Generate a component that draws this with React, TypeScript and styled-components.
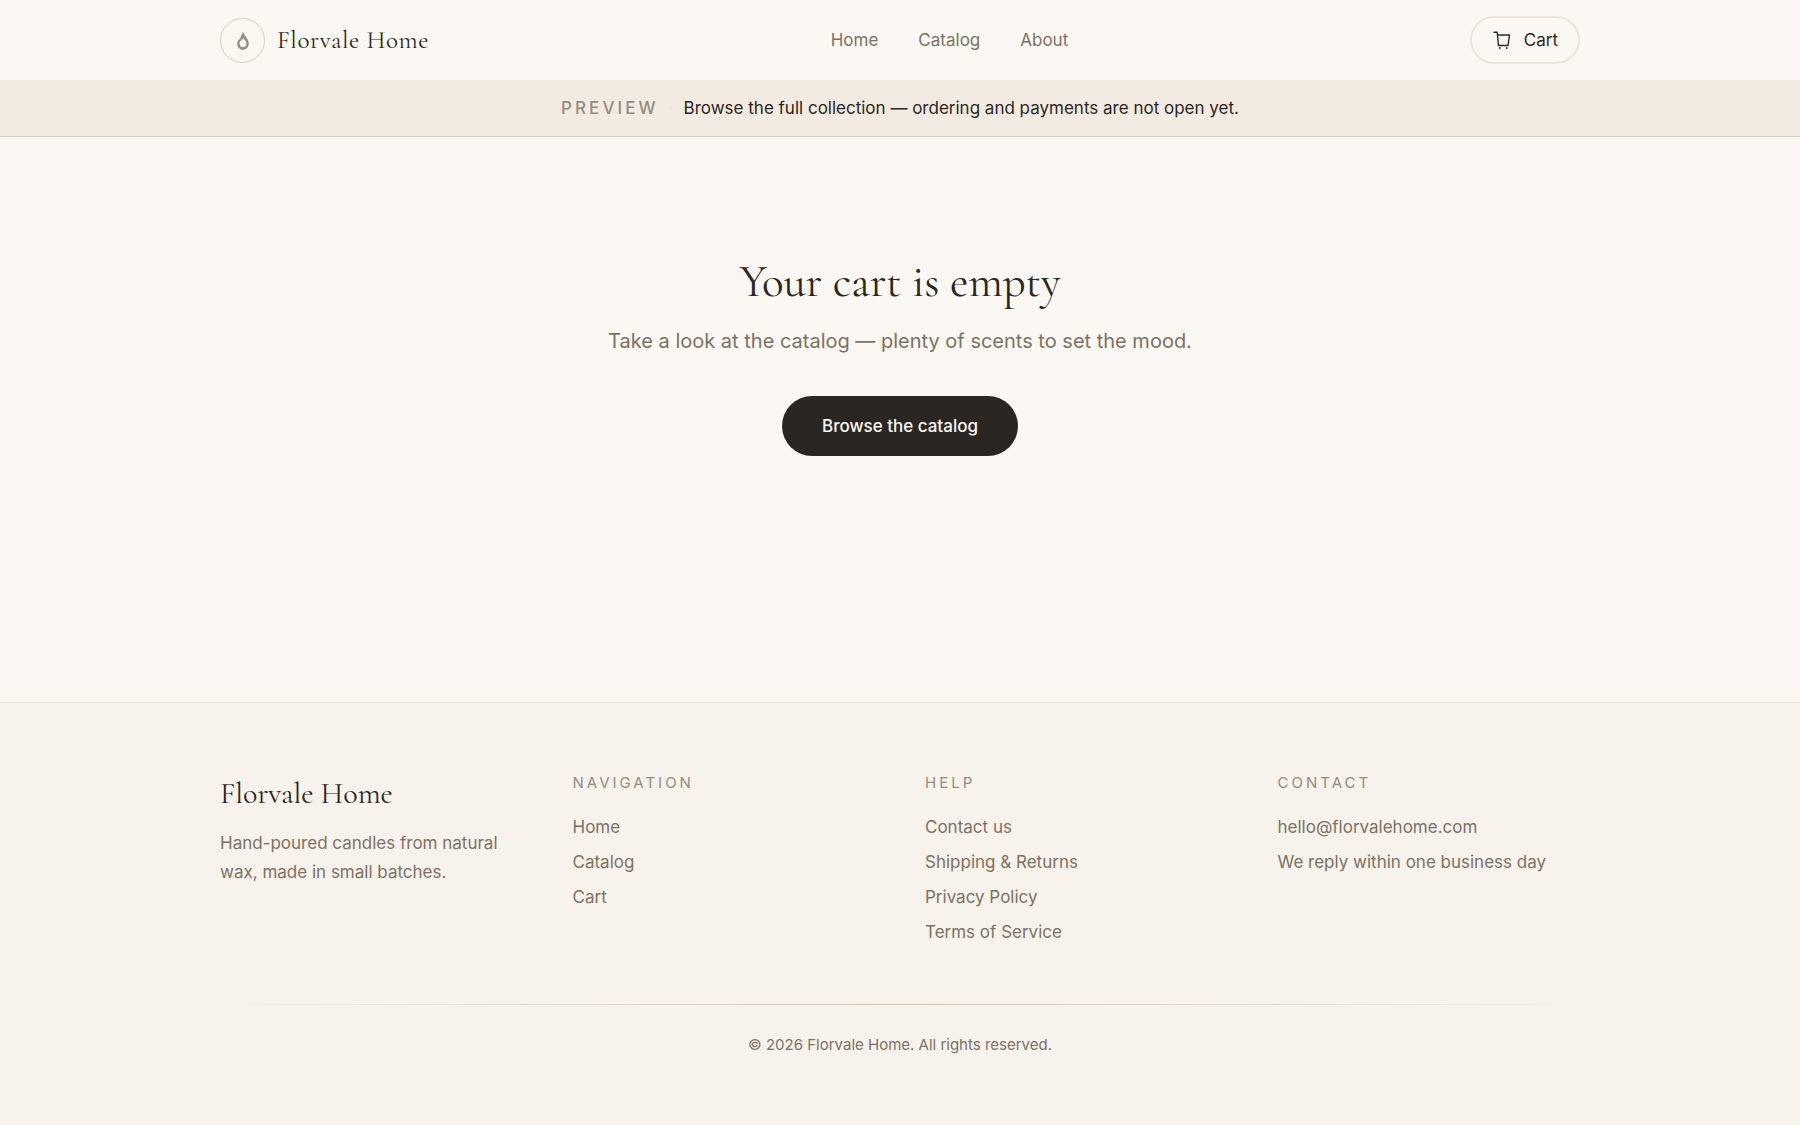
import React from 'react';
import styled, { createGlobalStyle } from 'styled-components';

const color = {
  page: '#fbf8f3',
  panel: '#f7f2ec',
  banner: '#f3ebe2',
  ink: '#2b2621',
  muted: '#7d7163',
  soft: '#968b7c',
  line: '#ede5d8',
  lineStrong: '#d9cebe',
};
const sans = 'Inter, "Noto Sans", sans-serif';
const serif = '"Cormorant Garamond", "Liberation Serif", serif';

const Global = createGlobalStyle`
  *, *::before, *::after { box-sizing: border-box; }
  body { margin: 0; background: ${color.page}; color: ${color.ink}; font: 400 17px/24px ${sans}; }
  h1, h2, p, ul { margin: 0; padding: 0; }
  ul { list-style: none; }
  a { color: inherit; text-decoration: none; }
  button { cursor: pointer; }
`;

const Page = styled.div`
  display: flex;
  flex-direction: column;
  min-height: 100vh;
`;

const Container = styled.div`
  width: 100%;
  max-width: 1424px;
  margin: 0 auto;
  padding: 0 32px;
`;

const HeaderBar = styled(Container)`
  display: flex;
  align-items: center;
  justify-content: space-between;
  padding-top: 16px;
  padding-bottom: 16px;
`;

const Brand = styled.a`
  display: flex;
  align-items: center;
  gap: 12px;
  font: 400 25px/32px ${serif};
  letter-spacing: 0.025em;
`;

const Mark = styled.span`
  display: flex;
  align-items: center;
  justify-content: center;
  width: 45px;
  height: 45px;
  border: 1px solid ${color.lineStrong};
  border-radius: 50%;
  color: ${color.soft};
`;

const Nav = styled.nav`
  display: flex;
  gap: 40px;
  color: ${color.muted};
`;

const CartButton = styled.button`
  display: flex;
  align-items: center;
  gap: 12px;
  height: 48px;
  padding: 0 20px;
  border: 2px solid ${color.line};
  border-radius: 24px;
  background: transparent;
  color: ${color.ink};
  font: 400 17px/24px ${sans};
`;

const Banner = styled.aside`
  display: flex;
  justify-content: center;
  align-items: center;
  gap: 10px;
  padding: 16px 32px;
  background: ${color.banner};
  border-bottom: 1px solid ${color.lineStrong};
`;

const Tag = styled.strong`
  font-weight: 500;
  letter-spacing: 0.18em;
  color: ${color.soft};
`;

const Dot = styled.span`
  color: ${color.line};
`;

const Main = styled.main`
  display: flex;
  flex-direction: column;
  align-items: center;
  padding: 120px 32px 246px;
  text-align: center;
`;

const Title = styled.h1`
  font: 400 45px/50px ${serif};
`;

const Lead = styled.p`
  margin-top: 18px;
  font-size: 20px;
  line-height: 32px;
  color: ${color.muted};
`;

const Primary = styled.button`
  margin-top: 39px;
  height: 60px;
  padding: 0 40px;
  border: 0;
  border-radius: 30px;
  background: ${color.ink};
  color: ${color.page};
  font: 500 17px/24px ${sans};
`;

const Foot = styled.footer`
  flex: 1;
  padding: 69px 0;
  background: ${color.panel};
  border-top: 1px solid ${color.line};
`;

const Columns = styled.div`
  display: grid;
  grid-template-columns: repeat(4, 1fr);
  gap: 50px;
`;

const FootBrand = styled.h2`
  padding-top: 2px;
  font: 400 30px/40px ${serif};
`;

const Tagline = styled.p`
  margin-top: 15px;
  line-height: 29px;
  color: ${color.muted};
`;

const ColumnTitle = styled.h2`
  padding-top: 1px;
  font: 400 15px/20px ${sans};
  letter-spacing: 0.2em;
  text-transform: uppercase;
  color: ${color.soft};
`;

const Links = styled.ul`
  display: flex;
  flex-direction: column;
  gap: 11px;
  margin-top: 22px;
  color: ${color.muted};
`;

const Rule = styled.div`
  height: 1px;
  margin-top: 60px;
  background: linear-gradient(90deg, transparent, #cfc2b0, transparent);
`;

const Legal = styled.p`
  margin-top: 30px;
  font-size: 15px;
  line-height: 20px;
  text-align: center;
  color: ${color.muted};
`;

const FlameIcon = () => (
  <svg width="24" height="24" viewBox="0 0 24 24" fill="currentColor" aria-hidden="true">
    <path
      fillRule="evenodd"
      d="M12 3.500c.5 4.200 5.800 6.500 5.800 12 0 3.700-2.500 6.200-5.800 6.200s-5.800-2.500-5.800-6c0-2.200 1.200-3.900 3.400-5.400-.3-2.500 1.700-3.800 2.400-6.800ZM12.200 10c-.6 1.800-3.700 2.700-3.700 5.600 0 2.200 1.500 3.700 3.500 3.700s3.500-1.500 3.500-3.700c0-2.300-2.100-3.600-3.300-5.600Z"
    />
  </svg>
);

const CartIcon = () => (
  <svg width="20" height="20" viewBox="0 0 20 20" fill="none" stroke="currentColor" strokeWidth="1.400" strokeLinecap="round" strokeLinejoin="round" aria-hidden="true">
    <path d="M2 2.200h3.200L6.500 15.500h9.500L17.500 5H5.500" />
    <circle cx="7.800" cy="18" r=".9" fill="currentColor" stroke="none" />
    <circle cx="14.800" cy="18" r=".9" fill="currentColor" stroke="none" />
  </svg>
);

const groups = [
  { title: 'Navigation', items: ['Home', 'Catalog', 'Cart'] },
  { title: 'Help', items: ['Contact us', 'Shipping & Returns', 'Privacy Policy', 'Terms of Service'] },
];

export default function App() {
  return (
    <Page>
      <Global />
      <HeaderBar as="header">
        <Brand href="#">
          <Mark><FlameIcon /></Mark>
          <span>Florvale Home</span>
        </Brand>
        <Nav>
          <a href="#home">Home</a>
          <a href="#catalog">Catalog</a>
          <a href="#about">About</a>
        </Nav>
        <CartButton type="button"><CartIcon />Cart</CartButton>
      </HeaderBar>
      <Banner>
        <Tag>PREVIEW</Tag>
        <Dot>·</Dot>
        <span>Browse the full collection — ordering and payments are not open yet.</span>
      </Banner>
      <Main>
        <Title>Your cart is empty</Title>
        <Lead>Take a look at the catalog — plenty of scents to set the mood.</Lead>
        <Primary type="button">Browse the catalog</Primary>
      </Main>
      <Foot>
        <Container>
          <Columns>
            <div>
              <FootBrand>Florvale Home</FootBrand>
              <Tagline>Hand-poured candles from natural wax, made in small batches.</Tagline>
            </div>
            {groups.map((group) => (
              <nav key={group.title} aria-label={group.title}>
                <ColumnTitle>{group.title}</ColumnTitle>
                <Links>
                  {group.items.map((item) => (
                    <li key={item}><a href="#">{item}</a></li>
                  ))}
                </Links>
              </nav>
            ))}
            <div>
              <ColumnTitle>Contact</ColumnTitle>
              <Links>
                <li><a href="mailto:hello@florvalehome.com">hello@florvalehome.com</a></li>
                <li>We reply within one business day</li>
              </Links>
            </div>
          </Columns>
          <Rule />
          <Legal>© 2026 Florvale Home. All rights reserved.</Legal>
        </Container>
      </Foot>
    </Page>
  );
}
